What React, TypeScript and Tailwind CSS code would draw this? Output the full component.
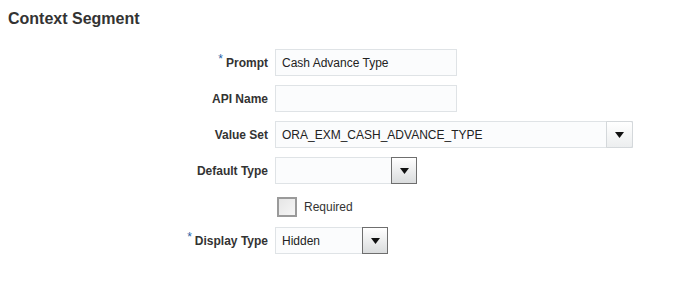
import React from "react";

const Tri = () => (
  <svg width="9" height="6" viewBox="0 0 9 6">
    <path d="M0 0 H9 L4.5 6 Z" fill="#111" />
  </svg>
);

const Label = ({ text, req }: { text: string; req?: boolean }) => (
  <div className="w-[268px] shrink-0 pr-0 text-right text-[12px] font-bold text-[#333333]">
    {req && <span className="relative -top-[4px] mr-[3px] text-[#1f5fa6] font-normal text-[12px]">*</span>}
    {text}
  </div>
);

const inputCls =
  "h-[27px] border border-[#dfe3e6] bg-[#fbfcfd] text-[12px] text-[#222] flex items-center pl-[6px] box-border";

export default function App() {
  return (
    <div
      className="w-[685px] h-[287px] bg-white relative"
      style={{ fontFamily: '"Liberation Sans", Arial, sans-serif' }}
    >
      <div className="pt-[9px] pl-[8px] text-[16px] font-bold text-[#333333] leading-[20px]">
        Context Segment
      </div>
      <div className="mt-[20px] flex flex-col">
        <div className="flex items-center h-[27px] gap-[7px]">
          <Label text="Prompt" req />
          <div className={`${inputCls} w-[182px]`}>Cash Advance Type</div>
        </div>
        <div className="flex items-center h-[27px] gap-[7px] mt-[9px]">
          <Label text="API Name" />
          <div className={`${inputCls} w-[182px]`}></div>
        </div>
        <div className="flex items-center h-[27px] gap-[7px] mt-[9px]">
          <Label text="Value Set" />
          <div className={`${inputCls} w-[358px] pr-0`}>
            <span className="flex-1">ORA_EXM_CASH_ADVANCE_TYPE</span>
            <div className="h-[27px] w-[27px] -mr-px -my-px border border-[#d4d8db] bg-gradient-to-b from-[#ffffff] to-[#eceeef] flex items-center justify-center rounded-r-[2px]">
              <Tri />
            </div>
          </div>
        </div>
        <div className="flex items-center h-[27px] gap-[7px] mt-[9px]">
          <Label text="Default Type" />
          <div className={`${inputCls} w-[142px] pr-0`}>
            <span className="flex-1"></span>
            <div className="h-[27px] w-[26px] -mr-px -my-px border border-[#6e6e6e] bg-gradient-to-b from-[#ffffff] to-[#dadcdd] flex items-center justify-center">
              <Tri />
            </div>
          </div>
        </div>
        <div className="flex items-center h-[27px] gap-[7px] mt-[9px]">
          <div className="w-[268px] shrink-0" />
          <div className="ml-[2px] w-[20px] h-[20px] border-2 border-[#9a9a9a] bg-gradient-to-br from-[#e6e6e6] to-[#f6f6f6]" />
          <span className="ml-[0px] text-[12px] text-[#333]">Required</span>
        </div>
        <div className="flex items-center h-[27px] gap-[7px] mt-[7px]">
          <Label text="Display Type" req />
          <div className={`${inputCls} w-[113px] pr-0`}>
            <span className="flex-1">Hidden</span>
            <div className="h-[27px] w-[26px] -mr-px -my-px border border-[#6e6e6e] bg-gradient-to-b from-[#ffffff] to-[#dadcdd] flex items-center justify-center">
              <Tri />
            </div>
          </div>
        </div>
      </div>
    </div>
  );
}
